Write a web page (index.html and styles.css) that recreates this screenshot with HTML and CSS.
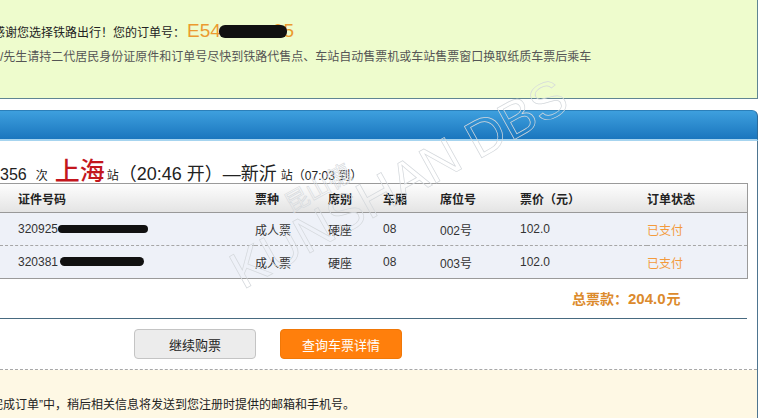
FILE: index.html
```html
<!DOCTYPE html>
<html lang="zh-CN">
<head>
  <meta charset="UTF-8">
  <title>订单完成</title>
  <link rel="stylesheet" href="styles.css">
</head>
<body>
  <div class="wrap">
    <div class="notice">
      <p class="thanks">感谢您选择铁路出行！您的订单号：<span class="order-no">E54<i class="blot blot-order"></i>05</span></p>
      <p class="hint">/先生请持二代居民身份证原件和订单号尽快到铁路代售点、车站自动售票机或车站售票窗口换取纸质车票后乘车</p>
    </div>

    <div class="panel">
      <div class="panel-head"></div>
      <div class="panel-body">
        <div class="train"><span class="num">356</span><span class="small ci">次</span><span class="city">上海</span><span class="small">站</span><span class="big">（20:46 开）—新沂</span><span class="small arrive">站（07:03 到）</span></div>

        <table class="tickets">
          <colgroup>
            <col style="width:255px"><col style="width:73px"><col style="width:55px"><col style="width:57px"><col style="width:80px"><col style="width:127px"><col style="width:100px">
          </colgroup>
          <thead>
            <tr>
              <th>证件号码</th><th>票种</th><th>席别</th><th>车厢</th><th>席位号</th><th>票价（元）</th><th>订单状态</th>
            </tr>
          </thead>
          <tbody>
            <tr>
              <td>320925<i class="blot blot-id"></i></td><td>成人票</td><td>硬座</td><td>08</td><td>002号</td><td>102.0</td><td class="paid">已支付</td>
            </tr>
            <tr>
              <td>320381<i class="blot blot-id2"></i></td><td>成人票</td><td>硬座</td><td>08</td><td>003号</td><td>102.0</td><td class="paid">已支付</td>
            </tr>
          </tbody>
        </table>

        <div class="total">总票款：<span class="sum">204.0</span>元</div>

        <div class="actions">
          <button class="btn btn-gray">继续购票</button>
          <button class="btn btn-orange">查询车票详情</button>
        </div>

        <div class="tip">完成订单”中，稍后相关信息将发送到您注册时提供的邮箱和手机号。</div>
      </div>
    </div>

    <svg class="watermark" width="758" height="419" viewBox="0 0 758 419">
      <g transform="rotate(-29 243 290)">
        <text x="243" y="290" class="wm-latin">KUNSHAN DBS</text>
        <text x="322" y="246" class="wm-cjk">昆山德</text>
      </g>
    </svg>
  </div>
</body>
</html>
```

FILE: styles.css
```css
body {
  margin: 0;
  background: #fff;
  font-family: "Liberation Sans", "Noto Sans CJK SC", sans-serif;
  font-size: 12px;
  color: #333;
}

.wrap {
  position: relative;
  width: 758px;
  height: 419px;
  overflow: hidden;
}

/* top green notice */
.notice {
  height: 98px;
  background: #eefccd;
  border-right: 1px solid #5f8592;
  border-bottom: 1px solid #5f8592;
}

.thanks {
  margin: 0;
  padding-top: 21px;
  line-height: 20px;
  text-indent: -7px;
  color: #222;
  white-space: nowrap;
}

.order-no {
  margin-left: 2px;
  font-size: 19px;
  color: #eb9a30;
}

.hint {
  margin: 4px 0 0;
  line-height: 20px;
  color: #555;
  white-space: nowrap;
}

.blot {
  display: inline-block;
  position: relative;
  z-index: 1;
  background: #111;
  border-radius: 6px;
}

.blot-order {
  width: 68px;
  height: 13px;
  margin: 0 -14px 0 -2px;
  vertical-align: -1px;
}

.blot-id {
  width: 90px;
  height: 8px;
  vertical-align: 0;
}

.blot-id2 {
  width: 84px;
  height: 9px;
  margin-left: 2px;
  vertical-align: 0;
}

/* order panel */
.panel {
  margin-top: 11px;
}

.panel-head {
  height: 31px;
  box-sizing: border-box;
  background: linear-gradient(#3ea0de, #1a76be);
  border-top: 1px solid #2b7fb9;
  border-right: 1px solid #2a6a9a;
  border-bottom: 2px solid #a6d4ef;
  border-top-right-radius: 6px;
}

.panel-body {
  border-right: 1px solid #4e7590;
}

.train {
  height: 24px;
  padding-top: 18px;
  line-height: 24px;
  white-space: nowrap;
  color: #222;
}

.train .num {
  font-size: 16px;
  margin-right: 9px;
}

.train .small {
  font-size: 12px;
}

.train .ci {
  margin-right: 7px;
}

.train .city {
  font-size: 25px;
  font-weight: 500;
  color: #c3161d;
  margin-right: 2px;
}

.train .big {
  font-size: 18px;
}

.train .arrive {
  margin-left: 4px;
}

.tickets {
  width: 747px;
  table-layout: fixed;
  border-collapse: separate;
  border-spacing: 0;
  border-top: 1px solid #9a9a9a;
  border-bottom: 1px solid #9a9a9a;
  border-right: 1px solid #9a9a9a;
}

.tickets th,
.tickets td {
  padding: 0;
  text-align: left;
  white-space: nowrap;
}

.tickets th:first-child,
.tickets td:first-child {
  padding-left: 18px;
}

.tickets th {
  height: 28px;
  font-weight: bold;
  color: #222;
  background: linear-gradient(#fdfdfd, #e4e4e4);
  border-bottom: 1px solid #999;
}

.tickets td {
  height: 32px;
  background: #eef1f8;
  color: #333;
}

.tickets tbody tr:first-child td {
  border-bottom: 1px dashed #a6a6a6;
}

.tickets .paid {
  color: #f39a3c;
}

.total {
  width: 747px;
  height: 40px;
  line-height: 40px;
  padding-left: 572px;
  box-sizing: border-box;
  border-bottom: 1px solid #486a80;
  font-size: 14px;
  font-weight: bold;
  color: #dc8a2c;
}

.total .sum {
  font-size: 15px;
  margin-right: 1px;
}

.actions {
  display: flex;
  gap: 24px;
  height: 40px;
  padding: 10px 0 0 134px;
  border-bottom: 1px dashed #a8a8a8;
}

.btn {
  width: 122px;
  height: 30px;
  border-radius: 4px;
  font-family: "Liberation Sans", "Noto Sans CJK SC", sans-serif;
  font-size: 13px;
  cursor: pointer;
}

.btn-gray {
  background: #ececec;
  border: 1px solid #c4c4c4;
  color: #222;
}

.btn-orange {
  background: #ff7f0c;
  border: 1px solid #f07808;
  color: #fff;
}

.tip {
  height: 48px;
  padding-top: 27px;
  box-sizing: border-box;
  line-height: 16px;
  text-indent: -9px;
  background: #fef8e4;
  color: #222;
  white-space: nowrap;
}

/* faint watermark over the screenshot */
.watermark {
  position: absolute;
  left: 0;
  top: 0;
  pointer-events: none;
}

.wm-latin {
  font-family: "Liberation Sans Narrow", "Liberation Sans", sans-serif;
  font-size: 52px;
  fill: none;
  stroke: #d4d8dc;
  stroke-width: 0.7;
}

.wm-cjk {
  font-family: "Noto Sans CJK SC", sans-serif;
  font-size: 24px;
  fill: none;
  stroke: #d4d8dc;
  stroke-width: 0.6;
}
```
